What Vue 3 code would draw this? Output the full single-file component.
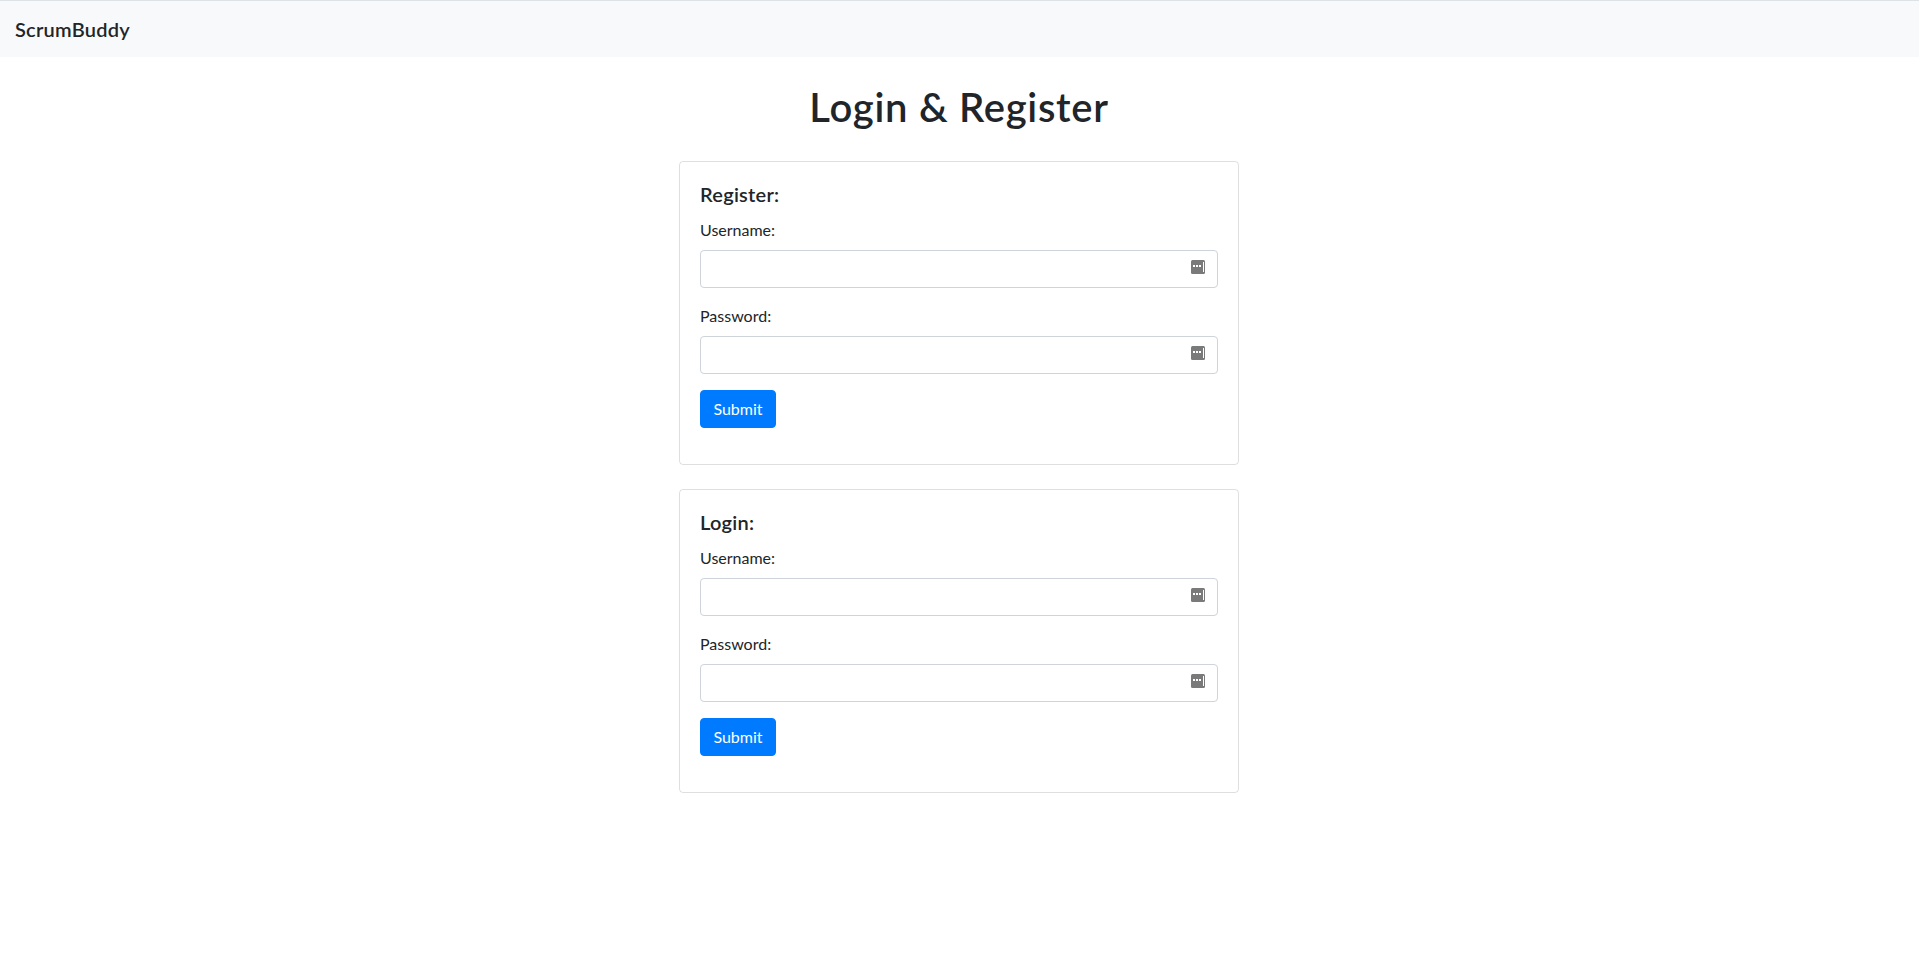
<script setup>
const forms = [
  { title: 'Register:' },
  { title: 'Login:' },
]
const fields = ['Username:', 'Password:']
</script>

<template>
  <div class="page">
    <nav class="navbar">
      <a class="brand" href="#">ScrumBuddy</a>
    </nav>
    <h1 class="heading">Login &amp; Register</h1>
    <div class="cards">
      <div v-for="form in forms" :key="form.title" class="card">
        <h5 class="card-title">{{ form.title }}</h5>
        <form @submit.prevent>
          <div v-for="field in fields" :key="field" class="form-group">
            <label class="field-label">{{ field }}</label>
            <div class="input-wrap">
              <input class="form-control" type="text" />
              <svg class="key-icon" width="14" height="14" viewBox="0 0 14 14">
                <rect x="0" y="0" width="14" height="14" rx="1.5" fill="#7a7a7a" />
                <rect x="2" y="5" width="2" height="2" fill="#fff" />
                <rect x="5" y="5" width="2" height="2" fill="#fff" />
                <rect x="8" y="5" width="2" height="2" fill="#fff" />
                <rect x="12" y="2" width="1" height="10" fill="#fff" />
              </svg>
            </div>
          </div>
          <button class="btn-submit" type="submit">Submit</button>
        </form>
      </div>
    </div>
  </div>
</template>

<style>
html, body { margin: 0; background: #fff; }
</style>

<style scoped>
.page { font-family: Lato, "Noto Sans", sans-serif; color: #212529; font-size: 16px; line-height: 24px; }
.navbar { display: flex; align-items: center; height: 56px; border-top: 1px solid #dee2e6; background: #f8f9fa; padding: 0 15px; }
.brand { color: #212529; font-size: 20px; font-weight: 600; letter-spacing: 0.25px; text-decoration: none; line-height: 30px; }
.heading { margin: 26px 1px 30px 0; font-size: 40px; font-weight: 600; line-height: 48px; text-align: center; letter-spacing: 0.7px; }
.cards { display: flex; flex-direction: column; align-items: center; gap: 24px; padding-right: 1px; }
.card { box-sizing: border-box; width: 560px; padding: 20px; border: 1px solid rgba(0,0,0,.125); border-radius: 4px; }
.card-title { margin: 0 0 12px; font-size: 20px; font-weight: 600; letter-spacing: 0.25px; line-height: 24px; }
.form-group { margin-bottom: 16px; }
.field-label { display: block; margin-bottom: 8px; }
.input-wrap { position: relative; }
.form-control { display: block; box-sizing: border-box; width: 100%; height: 38px; padding: 6px 12px; border: 1px solid #ced4da; border-radius: 4px; background: #fff; font: inherit; outline: none; }
.key-icon { position: absolute; top: 10px; right: 13px; }
.btn-submit { display: block; width: 76px; height: 38px; margin-bottom: 16px; padding: 0; border: 1px solid #007bff; border-radius: 4px; background: #007bff; color: #fff; font: inherit; cursor: pointer; }
</style>
